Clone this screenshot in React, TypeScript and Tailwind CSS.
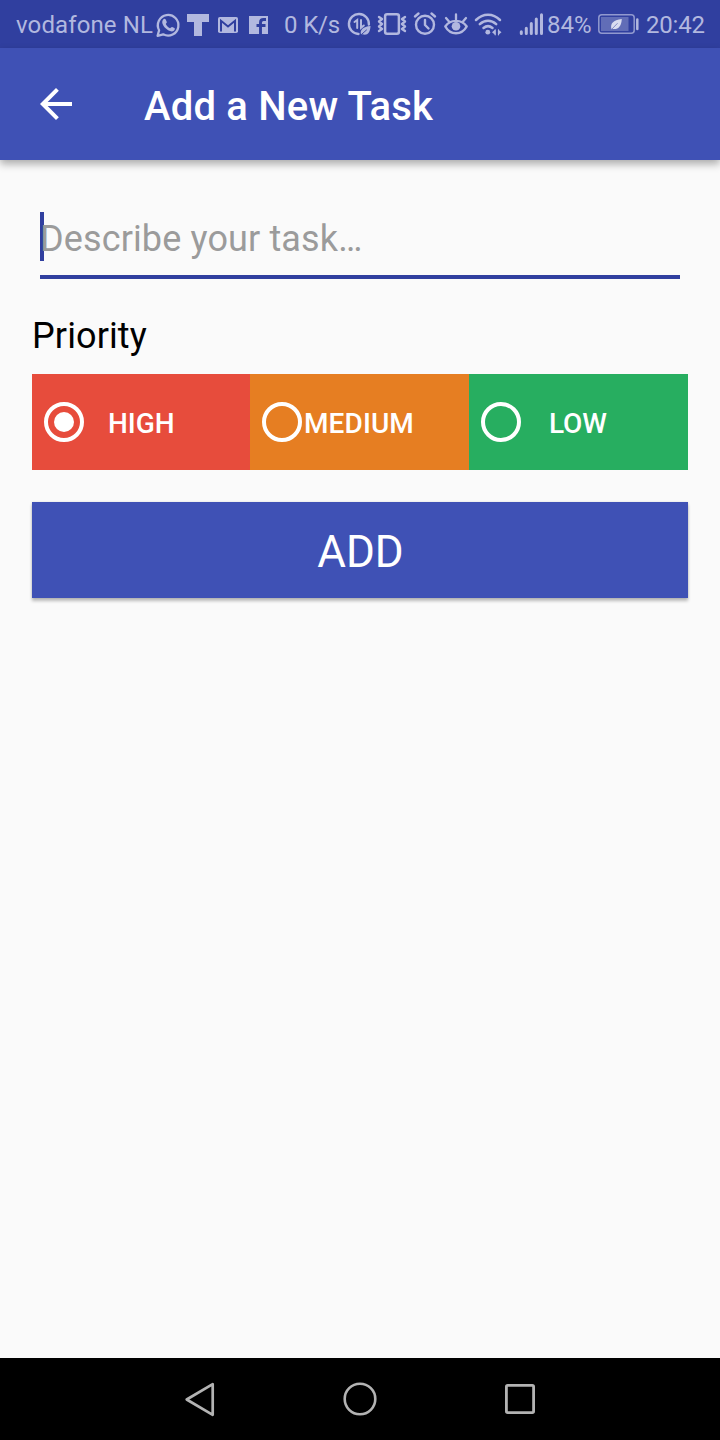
import type { ReactNode } from "react";

type GlyphProps = { box: string; className: string; children: ReactNode };

function Glyph({ box, className, children }: GlyphProps) {
  return (
    <svg viewBox={box} className={className} fill="none" stroke="currentColor" strokeLinecap="round" strokeLinejoin="round" aria-hidden="true">
      {children}
    </svg>
  );
}

function StatusBar() {
  return (
    <header className="flex h-12 shrink-0 items-start overflow-hidden bg-[#303f9f] pl-4 text-[24px] leading-[50px] whitespace-nowrap text-[#b2b8df]">
      <span className="w-[139px] shrink-0 tracking-[0.12px]">vodafone NL</span>
      <Glyph box="155 0 30 48" className="h-12 w-[30px] shrink-0">
        <path d="M157.600 35.800l1.500-5.600a10.300 10.300 0 1 1 4.100 4.100z" strokeWidth="2.300" />
        <path d="M163.200 19.500c1-1 2-.9 2.500.1l1.100 2.400c.3.7-.9 1.500-1 2.100.8 1.900 2.300 3.300 4.200 4.100.7-.2 1.400-1.500 2.200-1.200l2.200 1.100c.8.5.5 1.700-.3 2.400-1.600 1.400-3.600 1-6-.3-2.600-1.500-4.600-3.700-5.500-6.100-.6-1.800-.4-3.500.6-4.600z" fill="currentColor" stroke="none" />
      </Glyph>
      <Glyph box="185 0 29 48" className="h-12 w-[29px] shrink-0">
        <path d="M187 14h22v8h-7v14h-8V22h-7z" fill="currentColor" stroke="none" />
      </Glyph>
      <Glyph box="214 0 30 48" className="h-12 w-[30px] shrink-0">
        <rect x="218" y="17" width="20" height="16" rx="1.8" fill="currentColor" stroke="none" />
        <path d="M221 31.500V20.800l7 5.700 7-5.700v10.700" stroke="#303f9f" strokeWidth="2" strokeLinecap="butt" strokeLinejoin="miter" />
      </Glyph>
      <Glyph box="244 0 40 48" className="h-12 w-[40px] shrink-0">
        <rect x="249" y="16" width="19" height="18" fill="currentColor" stroke="none" />
        <path d="M260.500 34V22.500q0-3 3-3h2.500M256.500 25.500h9" stroke="#303f9f" strokeWidth="2.900" strokeLinecap="butt" />
      </Glyph>
      <span className="w-[60px] shrink-0 tracking-[-0.15px]">0 K/s</span>
      <Glyph box="344 0 30 48" className="h-12 w-[30px] shrink-0">
        <path d="M368.900 24.500a10 10 0 1 0-10.400 9.500" strokeWidth="2.400" />
        <path d="M354.500 22l2.700-2v8M361 20v7.800l2.800-2.300" strokeWidth="2" strokeLinejoin="miter" />
        <path d="M361 34.500c-1.200-4.500 2-8 9.500-8.500-.2 7-3.500 10-8 8.300z" fill="currentColor" stroke="none" />
        <path d="M360.500 35.300l6-5.300" stroke="#303f9f" strokeWidth=".9" />
      </Glyph>
      <Glyph box="374 0 36 48" className="h-12 w-[36px] shrink-0">
        <rect x="385.100" y="14.200" width="13.800" height="19.600" rx="2" strokeWidth="2.500" />
        <path d="M379 17l3 2-3 2.500 3 2.500-3 2.500 3 2.500-3 2M405 17l-3 2 3 2.500-3 2.500 3 2.500-3 2.500 3 2" strokeWidth="2.400" />
      </Glyph>
      <Glyph box="410 0 30 48" className="h-12 w-[30px] shrink-0">
        <circle cx="425" cy="24.800" r="9" strokeWidth="2.400" />
        <path d="M425 20v5l3.500 3.500M415 16.500l3.500-3M435 16.500l-3.500-3" strokeWidth="2.400" />
      </Glyph>
      <Glyph box="440 0 32 48" className="h-12 w-[32px] shrink-0">
        <path d="M445.300 26.500c5-7.500 16.400-7.500 21.400 0-5 9-16.400 9-21.400 0z" strokeWidth="2.400" />
        <circle cx="456" cy="26.300" r="4.300" fill="currentColor" stroke="none" />
        <path d="M456 14.500v5M446 18l3 3.500M466 18l-3 3.500" strokeWidth="2.300" />
      </Glyph>
      <Glyph box="472 0 44 48" className="h-12 w-[44px] shrink-0">
        <path d="M476 20c7-7 17-7 24 0M479.800 24.200c5-4.600 11.400-4.600 16.400 0M483.500 28c3-2.500 6-2.500 9 0" strokeWidth="2.500" />
        <circle cx="487.800" cy="32.200" r="2.400" fill="currentColor" stroke="none" />
        <path d="M492 32.200l3.300-2.700v5.500zM501.500 32.200l-3.300 2.800v-5.500z" fill="currentColor" stroke="none" />
        <path d="M495.200 29.800v5M498.500 29.800v5" strokeWidth="1.200" />
      </Glyph>
      <Glyph box="516 0 31 48" className="h-12 w-[31px] shrink-0">
        <path d="M521.300 31.700v1.800M526.300 28.200v5.300M531.300 23.500v10M536.300 19v14.500M541.500 14.700v18.800" strokeWidth="3" />
      </Glyph>
      <span className="w-[48px] shrink-0">84%</span>
      <Glyph box="595 0 51 48" className="h-12 w-[51px] shrink-0">
        <rect x="598.800" y="14.800" width="35.400" height="18.400" rx="3" strokeWidth="1.500" opacity=".75" />
        <rect x="601" y="17" width="27.500" height="14" fill="currentColor" stroke="none" opacity=".38" />
        <path d="M611.500 29.200c-1.500-5.500 1.500-9 10.300-10.200-.5 7.500-3.500 10.800-9.300 10z" fill="#d9dcf0" stroke="none" />
        <path d="M611.300 29.700l6-6.200" stroke="#6974ba" strokeWidth=".8" />
        <path d="M637.300 19.500v9.500" strokeWidth="2.500" />
      </Glyph>
      <span className="shrink-0 tracking-[-0.2px]">20:42</span>
    </header>
  );
}

const priorities = [
  { label: "HIGH", color: "bg-[#e74c3c]", gap: "pl-6", checked: true },
  { label: "MEDIUM", color: "bg-[#e67e22]", gap: "pl-[2px] tracking-[0.1px]", checked: false },
  { label: "LOW", color: "bg-[#27ae60]", gap: "pl-7 tracking-[-0.2px]", checked: false },
];

export default function App() {
  return (
    <div className="flex h-[1440px] w-[720px] flex-col overflow-hidden bg-[#fafafa] font-[Roboto,sans-serif]">
      <StatusBar />
      <div className="z-10 flex h-28 shrink-0 items-center bg-[#3f51b5] pl-8 text-white shadow-[0_4px_8px_rgba(0,0,0,0.32)]">
        <button type="button" aria-label="Back" className="h-12 w-12">
          <svg viewBox="0 0 24 24" className="h-12 w-12" fill="currentColor" aria-hidden="true">
            <path d="M20 11H7.830l5.590-5.590L12 4l-8 8 8 8 1.410-1.410L7.830 13H20v-2z" />
          </svg>
        </button>
        <h1 className="pt-[6px] pl-16 text-[40px] leading-[48px] font-medium tracking-[0.2px]">Add a New Task</h1>
      </div>

      <main className="flex flex-1 flex-col px-8 pt-[52px]">
        <div className="mx-2 flex h-[67px] items-start border-b-4 border-[#303f9f]">
          <span className="-mr-1 h-[49px] w-1 shrink-0 bg-[#303f9f]" />
          <span className="pt-[3px] text-[36px] leading-[48px] tracking-[0.13px] text-[#9b9b9b]">Describe your task…</span>
        </div>
        <h2 className="mt-[33px] h-[62px] text-[36px] leading-[48px] tracking-[0.12px] text-black">Priority</h2>
        <div className="grid h-24 grid-cols-[218px_219px_219px]">
          {priorities.map((p) => (
            <label key={p.label} className={`flex items-center pl-3 text-white ${p.color}`}>
              <span className="flex size-10 shrink-0 items-center justify-center rounded-full border-4 border-white">
                {p.checked && <span className="size-5 rounded-full bg-white" />}
              </span>
              <span className={`pt-[3px] text-[28px] leading-8 font-medium ${p.gap}`}>{p.label}</span>
            </label>
          ))}
        </div>
        <button type="button" className="mt-8 h-24 bg-[#3f51b5] pt-1 pl-px text-[44px] leading-[52px] text-white shadow-[0_3px_3px_rgba(0,0,0,0.25),0_0_2px_rgba(0,0,0,0.12)]">
          ADD
        </button>
      </main>

      <nav className="flex h-[82px] shrink-0 items-center justify-center gap-[120px] bg-black text-[#b3b3b3]">
        <Glyph box="0 0 40 40" className="size-10">
          <path d="M32.700 5.200v30.600L6.700 20.500z" strokeWidth="2.700" />
        </Glyph>
        <Glyph box="0 0 40 40" className="size-10">
          <circle cx="20" cy="20" r="15.300" strokeWidth="2.600" />
        </Glyph>
        <Glyph box="0 0 40 40" className="size-10">
          <rect x="6.400" y="6.400" width="27.200" height="27.200" rx="1.300" strokeWidth="2.800" />
        </Glyph>
      </nav>
    </div>
  );
}
